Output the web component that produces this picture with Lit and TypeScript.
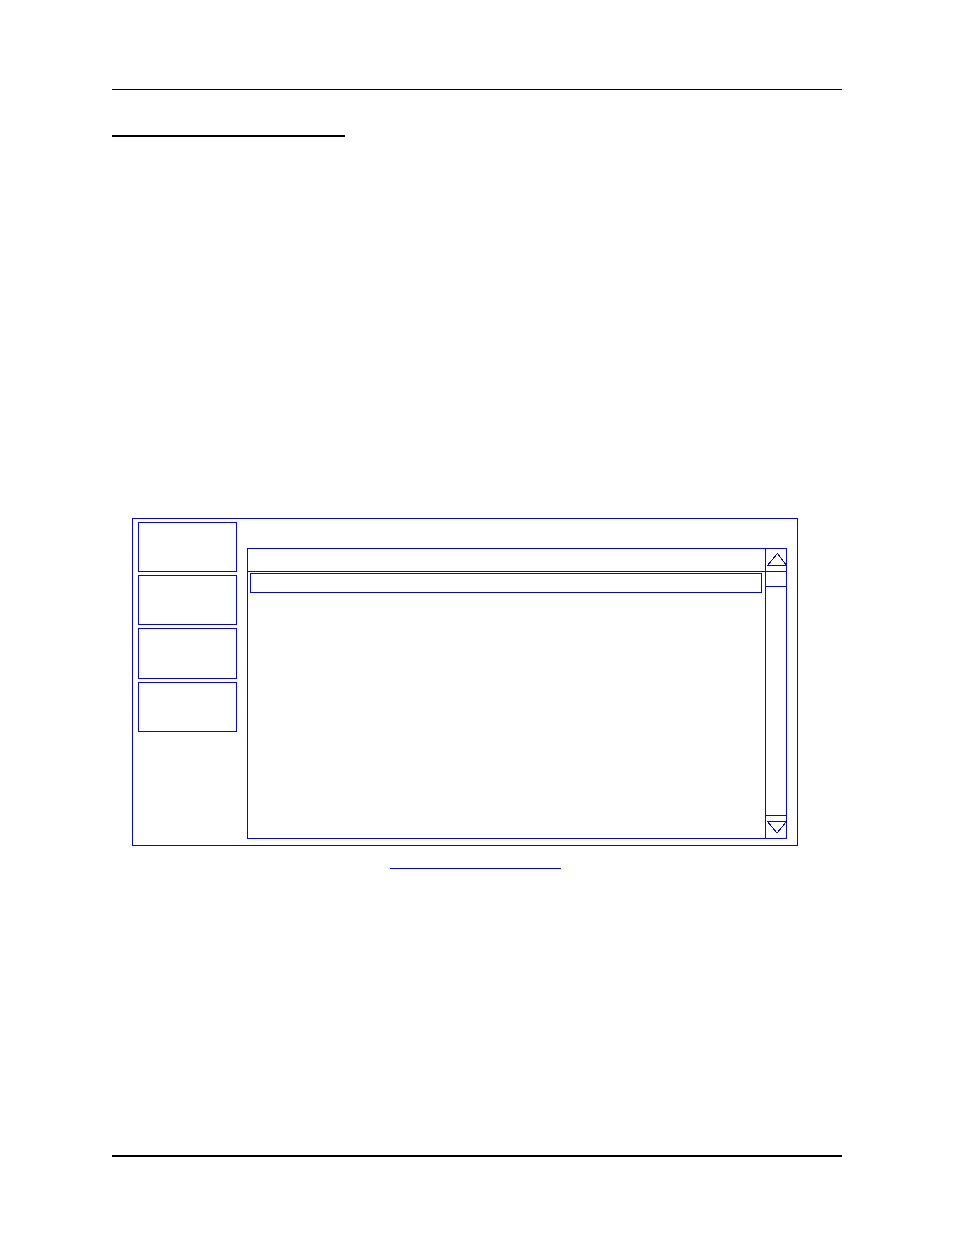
import { LitElement, html, css } from "lit";
import { customElement, property } from "lit/decorators.js";

// Scrollable list with a header strip, a selected row and a stepped scroll bar.
@customElement("list-panel")
class ListPanel extends LitElement {
  static styles = css`
    :host { display: block; min-width: 0; }
    .frame {
      box-sizing: border-box;
      height: 100%;
      display: grid;
      grid-template-columns: minmax(0, 1fr) 21px;
      border: 1px solid #00f;
    }
    .list { display: flex; flex-direction: column; }
    .header { height: 22px; border-bottom: 1px solid #00f; }
    .row {
      box-sizing: border-box;
      height: 20px;
      margin: 1px 3px 0 2px;
      border: 1px solid #00f;
    }
    .scroll { display: flex; flex-direction: column; border-left: 1px solid #00f; }
    button {
      box-sizing: content-box;
      display: block;
      width: 100%;
      height: 22px;
      margin: 0;
      padding: 0;
      border: 0 solid #00f;
      background: none;
    }
    .up { border-bottom-width: 1px; }
    .down { border-top-width: 1px; }
    .track { flex: 1; }
    .thumb { height: 14px; border-bottom: 1px solid #00f; }
    svg { display: block; overflow: visible; fill: none; stroke: #00f; stroke-width: 1; shape-rendering: crispEdges; }
  `;

  render() {
    return html`
      <div class="frame">
        <div class="list">
          <div class="header"></div>
          <div class="row"></div>
        </div>
        <div class="scroll">
          <button class="up" type="button" aria-label="Scroll up">
            <svg width="20" height="22" viewBox="0 0 20 22"><path d="M1.5 16.5H20.5L11.5 4.5Z" /></svg>
          </button>
          <div class="track"><div class="thumb"></div></div>
          <button class="down" type="button" aria-label="Scroll down">
            <svg width="20" height="22" viewBox="0 0 20 22"><path d="M1.5 5.5H20.5L11.5 16.5H10.5Z" /></svg>
          </button>
        </div>
      </div>
    `;
  }
}

@customElement("app-root")
class AppRoot extends LitElement {
  @property({ type: Array }) actions = [1, 2, 3, 4];

  static styles = css`
    :host {
      display: block;
      box-sizing: border-box;
      min-height: 100vh;
      padding: 89px 112px 78px;
      background: #fff;
      color: #000;
      font-family: "Liberation Sans", Arial, sans-serif;
    }
    .page-header { border-top: 1px solid #000; }
    .title { width: 233px; height: 45px; border-bottom: 2px solid #000; }
    .copy { height: 381px; }
    .window {
      display: grid;
      grid-template-columns: 99px minmax(0, 1fr);
      column-gap: 10px;
      margin: 0 44px 0 20px;
      padding: 3px 10px 6px 5px;
      border: 1px solid #00f;
    }
    .actions {
      display: grid;
      grid-template-rows: 50px 50px 51px 50px;
      row-gap: 3px;
      align-content: start;
    }
    .action { margin: 0; padding: 0; border: 1px solid #00f; background: #fff; }
    .list { height: 291px; margin-top: 26px; }
    .caption { display: flex; justify-content: center; margin: 0 3px 0 0; }
    .caption a { width: 171px; height: 22px; border-bottom: 1px solid #00f; }
    .notes { height: 286px; }
    .page-footer { border-top: 2px solid #000; }
  `;

  render() {
    return html`
      <header class="page-header"><div class="title"></div></header>
      <main>
        <div class="copy"></div>
        <section class="window">
          <div class="actions">
            ${this.actions.map((n) => html`<button class="action" type="button" aria-label="Action ${n}"></button>`)}
          </div>
          <list-panel class="list"></list-panel>
        </section>
        <div class="caption"><a href="#window" aria-label="Window"></a></div>
        <div class="notes"></div>
      </main>
      <footer class="page-footer"></footer>
    `;
  }
}
